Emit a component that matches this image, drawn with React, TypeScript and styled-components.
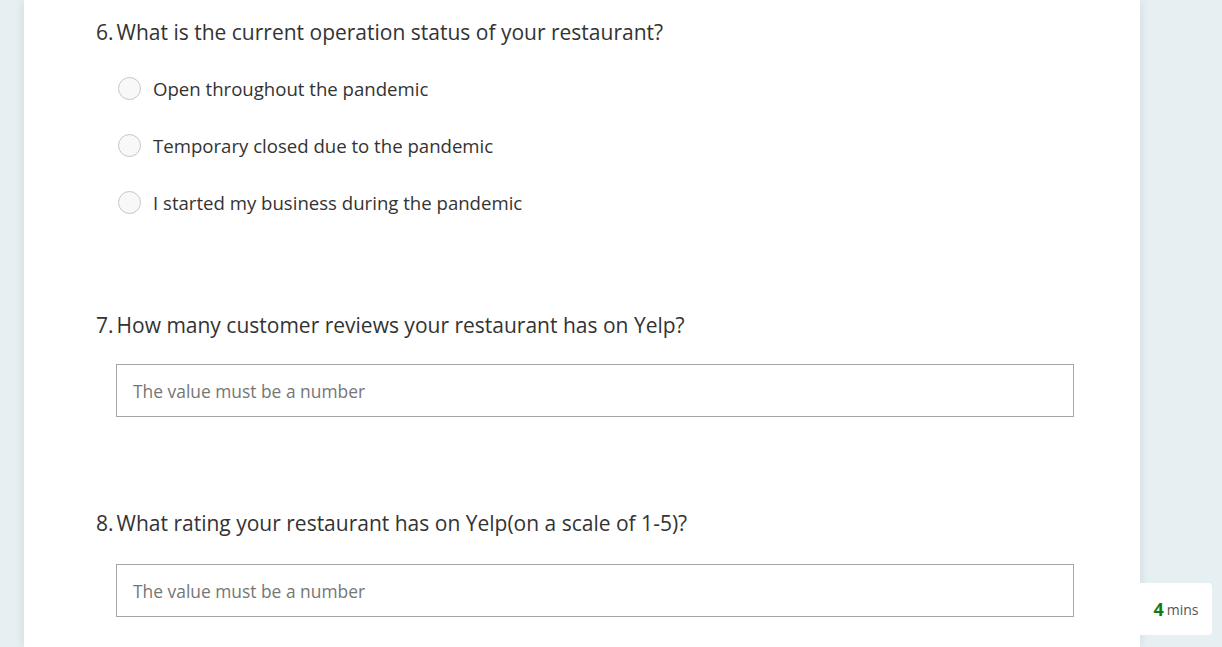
import React from "react";
import styled, { createGlobalStyle } from "styled-components";

const GlobalStyle = createGlobalStyle`
  html, body { margin: 0; padding: 0; }
  body {
    background: #e6eff2;
    font-family: "Open Sans", "Noto Sans", sans-serif;
    color: #333333;
  }
`;

const Page = styled.div`
  display: flex;
  height: 647px;
  overflow: hidden;
  padding-left: 24px;
`;

const Card = styled.main`
  width: 1116px;
  flex: none;
  background: #ffffff;
  box-shadow: 0 0 10px rgba(0, 40, 60, 0.1);
  padding: 18px 66px 0 72px;
  box-sizing: border-box;
`;

const Side = styled.aside`
  flex: 1;
  display: flex;
  flex-direction: column;
  justify-content: flex-end;
  padding-bottom: 12px;
`;

const TimeBadge = styled.div`
  width: 72px;
  height: 52px;
  background: #ffffff;
  border-radius: 0 4px 4px 0;
  display: flex;
  align-items: center;
  justify-content: center;
  gap: 3px;
  font-size: 14px;
  color: #555555;
`;

const Minutes = styled.span`
  font-size: 18px;
  font-weight: 700;
  color: #107c10;
`;

const Question = styled.section<{ $gap: number }>`
  padding-bottom: ${(p) => p.$gap}px;
`;

const Title = styled.h2`
  margin: 0;
  display: flex;
  font-size: 21px;
  font-weight: 400;
  line-height: 28px;
  color: #333333;
`;

const Num = styled.span`
  margin-right: 3px;
`;

const OptionList = styled.div`
  margin-top: 14px;
  padding-left: 22px;
  display: flex;
  flex-direction: column;
`;

const Option = styled.label`
  height: 57px;
  display: flex;
  align-items: center;
  gap: 12px;
  font-size: 18.6px;
  color: #333333;
`;

const Radio = styled.span`
  width: 21px;
  height: 21px;
  border-radius: 50%;
  border: 1px solid #c6c6c6;
  background: #f8f8f8;
  flex: none;
`;

const Input = styled.div<{ $top: number }>`
  margin: ${(p) => p.$top}px 0 0 20px;
  height: 53px;
  box-sizing: border-box;
  border: 1px solid #a6a6a6;
  display: flex;
  align-items: center;
  padding: 1px 0 0 16px;
  font-size: 17.4px;
  color: #767676;
`;

const options = [
  "Open throughout the pandemic",
  "Temporary closed due to the pandemic",
  "I started my business during the pandemic",
];

export default function App() {
  return (
    <>
      <GlobalStyle />
      <Page>
        <Card>
          <Question $gap={80}>
            <Title>
              <Num>6.</Num>What is the current operation status of your restaurant?
            </Title>
            <OptionList>
              {options.map((o) => (
                <Option key={o}>
                  <Radio />
                  {o}
                </Option>
              ))}
            </OptionList>
          </Question>
          <Question $gap={92}>
            <Title>
              <Num>7.</Num>How many customer reviews your restaurant has on Yelp?
            </Title>
            <Input $top={25}>The value must be a number</Input>
          </Question>
          <Question $gap={0}>
            <Title>
              <Num>8.</Num>What rating your restaurant has on Yelp(on a scale of 1-5)?
            </Title>
            <Input $top={27}>The value must be a number</Input>
          </Question>
        </Card>
        <Side>
          <TimeBadge>
            <Minutes>4</Minutes>mins
          </TimeBadge>
        </Side>
      </Page>
    </>
  );
}
